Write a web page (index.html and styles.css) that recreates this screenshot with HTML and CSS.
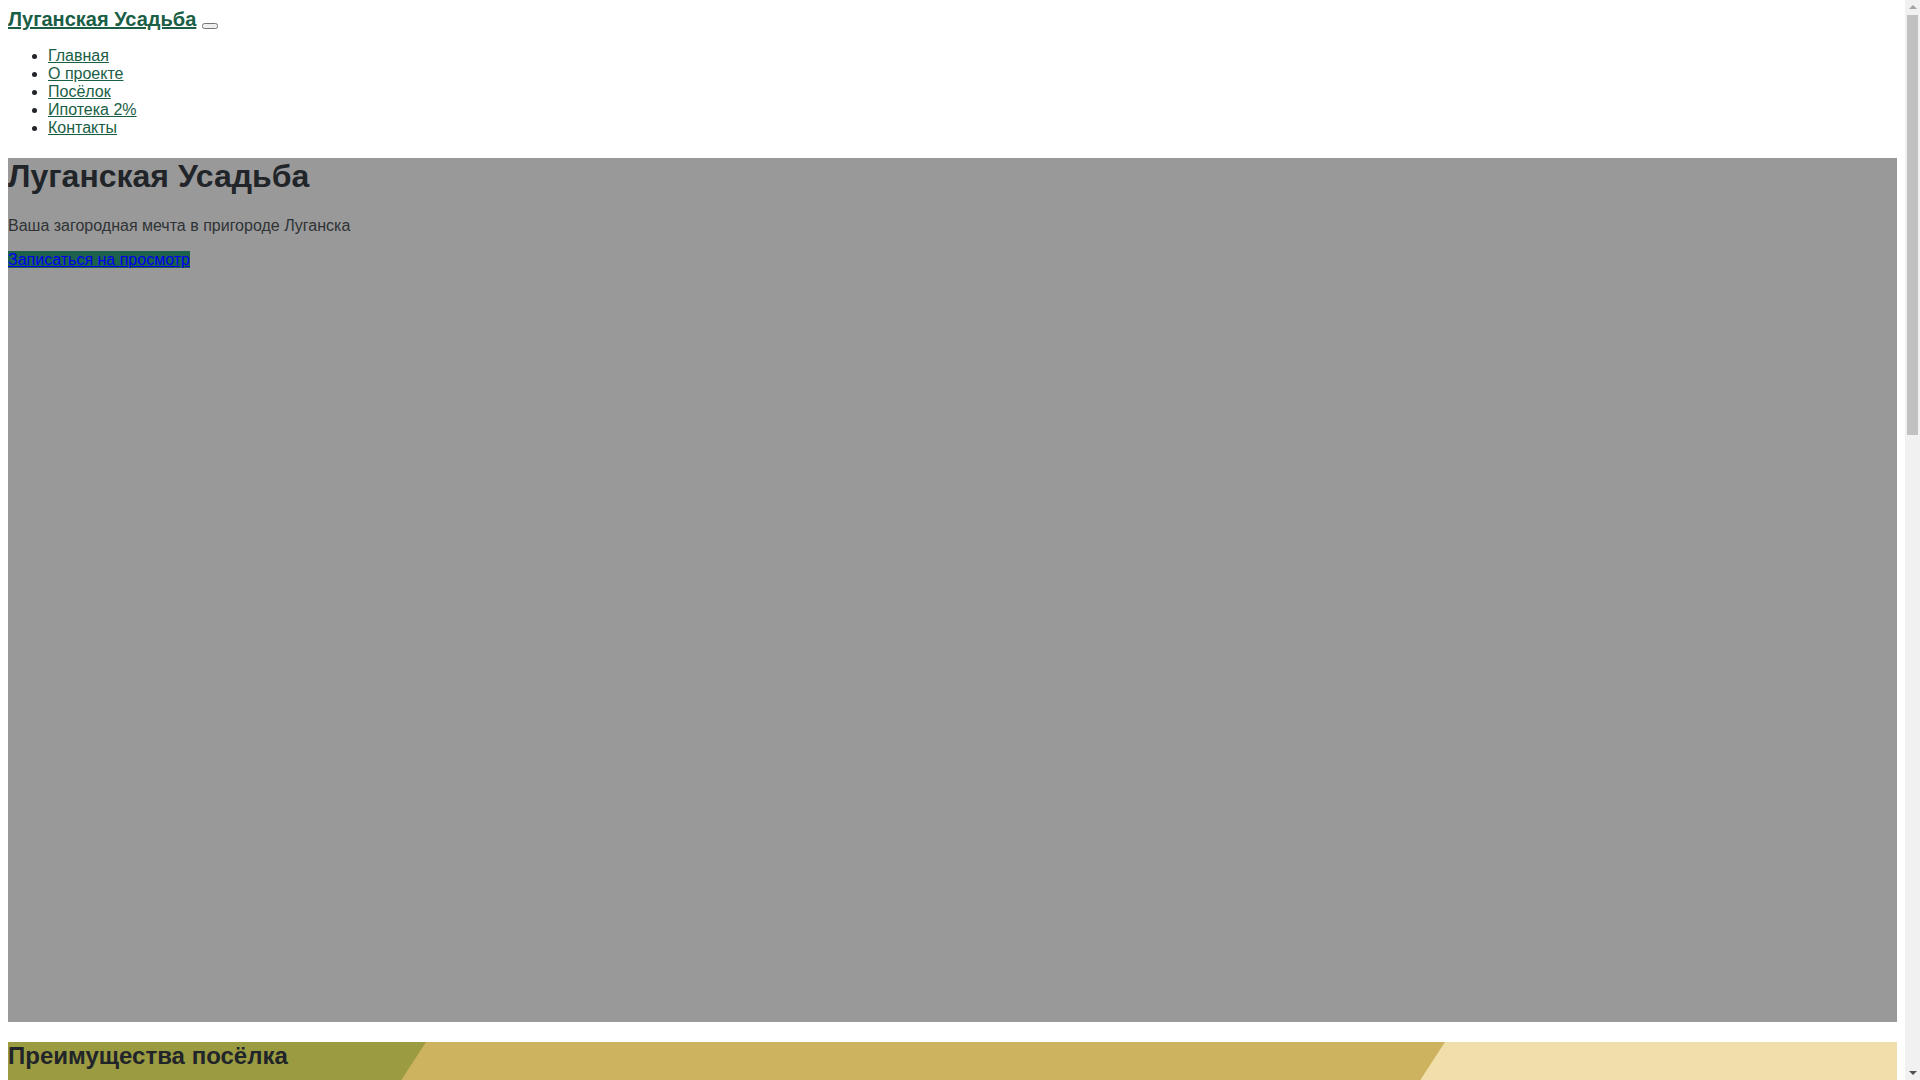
FILE: index.html
```html
<!DOCTYPE html>
<html lang="ru">
<head>
<meta charset="utf-8">
<title>Луганская Усадьба</title>
<link rel="stylesheet" href="styles.css">
</head>
<body>
<header class="site-header">
  <div class="brand-row"><a class="brand" href="#">Луганская Усадьба</a> <button class="toggler" type="button"></button></div>
  <ul class="menu">
    <li><a href="#">Главная</a></li>
    <li><a href="#">О проекте</a></li>
    <li><a href="#">Посёлок</a></li>
    <li><a href="#">Ипотека 2%</a></li>
    <li><a href="#">Контакты</a></li>
  </ul>
</header>
<section class="hero">
  <h1 class="hero-title">Луганская Усадьба</h1>
  <p class="hero-sub">Ваша загородная мечта в пригороде Луганска</p>
  <p class="hero-cta"><a class="cta" href="#">Записаться на просмотр</a></p>
</section>
<section class="advantages">
  <h2 class="adv-title">Преимущества посёлка</h2>
</section>
<div class="fake-scrollbar" aria-hidden="true">
  <div class="sb-arrow sb-up"></div>
  <div class="sb-thumb"></div>
  <div class="sb-arrow sb-down"></div>
</div>
</body>
</html>
```
FILE: styles.css
```css
html, body {
  font-family: "Liberation Sans", Arial, sans-serif;
  font-size: 16px;
}
body {
  margin: 8px 23px 8px 8px;
  background: #ffffff;
  color: #212529;
}
.brand-row {
  font-size: 20px;
}
.brand {
  color: #1a5e45;
  font-weight: bold;
  font-size: 20px;
}
.menu {
  margin: 16px 0;
  padding-left: 40px;
}
.menu a {
  color: #1a5e45;
}
.hero {
  background: #999999;
  min-height: 864px;
  margin-top: 21.44px;
}
.hero-title {
  margin: 0 0 21.44px;
  font-size: 32px;
  font-weight: bold;
  color: #212529;
}
.hero-sub {
  margin: 0 0 16px;
  color: #2f3336;
}
.hero-cta {
  margin: 0;
}
.cta {
  color: #0000ee;
  background: #1c614b;
}
.advantages {
  position: relative;
  isolation: isolate;
  overflow: hidden;
  margin-top: 20px;
  min-height: 1670px;
  background: #9b9c42;
}
.advantages::before,
.advantages::after {
  content: "";
  position: absolute;
  top: 0;
  bottom: 0;
  width: 4000px;
  transform-origin: 0 0;
  transform: skewX(-33deg);
  z-index: -1;
}
.advantages::before {
  left: 418px;
  background: #cdb25f;
}
.advantages::after {
  left: 1437px;
  background: #f0dfab;
}
.adv-title {
  margin: 0;
  font-size: 24px;
  font-weight: bold;
  color: #212529;
}
.fake-scrollbar {
  position: fixed;
  top: 0;
  right: 0;
  width: 15px;
  height: 100vh;
  background: #f1f1f1;
  display: flex;
  flex-direction: column;
  align-items: center;
}
.sb-arrow {
  width: 0;
  height: 0;
  border-left: 4px solid transparent;
  border-right: 4px solid transparent;
}
.sb-up {
  margin-top: 5px;
  border-bottom: 4px solid #a3a3a3;
}
.sb-thumb {
  margin-top: 6px;
  width: 11px;
  height: 420px;
  background: #c1c1c1;
}
.sb-down {
  margin-top: auto;
  margin-bottom: 5px;
  border-top: 4px solid #505050;
}
```
